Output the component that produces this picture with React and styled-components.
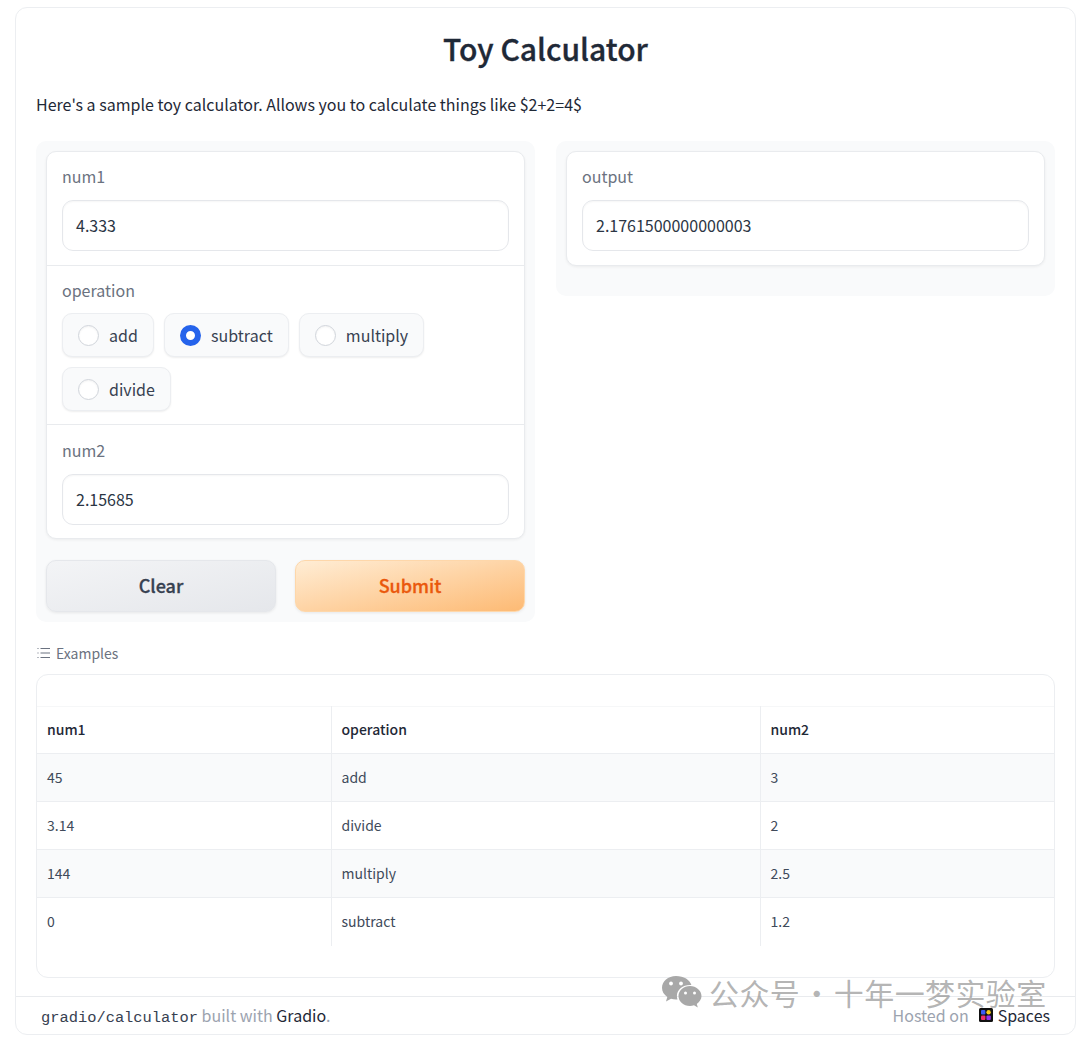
import React from "react";
import styled, { createGlobalStyle } from "styled-components";

const Global = createGlobalStyle`
  html, body { margin: 0; padding: 0; background: #fff; }
  body { font-family: "Noto Sans CJK SC", "Noto Sans", sans-serif; color: #1f2937; }
  * { box-sizing: border-box; }
`;
const Page = styled.div`
  position: relative;
  width: 1080px;
  height: 1037px;
  padding: 7px 4px 2px 15px;
`;
const Card = styled.div`
  height: 1028px;
  border: 1px solid #eceef1;
  border-radius: 12px;
  display: flex;
  flex-direction: column;
`;
const Main = styled.main`
  flex: 1;
  padding: 0 20px;
`;
const Title = styled.h1`
  margin: 0;
  padding-top: 19px;
  height: 70px;
  line-height: 42px;
  text-align: center;
  font-size: 30px;
  font-weight: 500;
  -webkit-text-stroke: 0.35px #1f2937;
  color: #1f2937;
`;
const Desc = styled.p`
  margin: 0;
  height: 63px;
  padding-top: 14px;
  line-height: 24px;
  font-size: 16px;
  color: #1f2937;
`;
const Columns = styled.div`
  display: flex;
  gap: 21px;
  align-items: flex-start;
`;
const Panel = styled.div`
  width: 499px;
  padding: 10px;
  border-radius: 10px;
  background: #f9fafb;
  padding-bottom: ${(p) => p.$bottom || 10}px;
`;
const Form = styled.div`
  border: 1px solid #e9ebee;
  border-radius: 10px;
  background: #fff;
  box-shadow: 0 1px 3px rgba(0, 0, 0, 0.06);
  overflow: hidden;
`;
const Block = styled.div`
  padding: ${(p) => p.$top ?? 13}px 15px ${(p) => p.$bottom ?? 13}px;
  border-top: ${(p) => (p.$first ? "none" : "1px solid #e9ebee")};
`;
const Label = styled.div`
  font-size: 16px;
  line-height: 24px;
  height: 24px;
  color: #6b7280;
  margin-bottom: ${(p) => p.$mb ?? 11}px;
`;
const Input = styled.div`
  height: 51px;
  padding: 0 13px 2px;
  border: 1px solid #e5e7eb;
  border-radius: 11px;
  background: #fff;
  box-shadow: inset 0 1px 2px rgba(0, 0, 0, 0.04);
  display: flex;
  align-items: center;
  font-size: 16px;
  color: #2b3544;
`;
const Radios = styled.div`
  display: flex;
  flex-wrap: wrap;
  gap: 10px 10.2px;
`;
const Radio = styled.div`
  height: 44px;
  padding: 0 15px;
  display: flex;
  align-items: center;
  gap: 10px;
  border: 1px solid #eceef1;
  border-radius: 10px;
  background: #f9fafb;
  box-shadow: 0 1px 2px rgba(0, 0, 0, 0.07);
  font-size: 16px;
  color: #374151;
`;
const Dot = styled.span`
  width: 21px;
  height: 21px;
  border-radius: 50%;
  background: #fff;
  border: ${(p) => (p.$on ? "6.5px solid #2563eb" : "1px solid #d1d5db")};
  box-shadow: ${(p) => (p.$on ? "none" : "inset 0 1px 2px rgba(0,0,0,.05)")};
`;
const Buttons = styled.div`
  display: flex;
  gap: 19px;
  margin-top: 21px;
`;
const Button = styled.div`
  flex: 1;
  height: 52px;
  padding-bottom: 2px;
  border-radius: 10px;
  display: flex;
  align-items: center;
  justify-content: center;
  font-size: 18px;
  font-weight: 500;
  -webkit-text-stroke: 0.3px ${(p) => (p.$primary ? "#ea580c" : "#374151")};
  border: 1px solid ${(p) => (p.$primary ? "#fed7aa" : "#e5e7eb")};
  color: ${(p) => (p.$primary ? "#ea580c" : "#374151")};
  background: ${(p) =>
    p.$primary
      ? "linear-gradient(to bottom right, #ffedd5, #fdba74)"
      : "linear-gradient(to bottom right, #f3f4f6, #e5e7eb)"};
  box-shadow: 0 1px 3px rgba(0, 0, 0, 0.08);
`;
const ExamplesHead = styled.div`
  display: flex;
  align-items: center;
  gap: 5px;
  height: 24px;
  margin-top: 19px;
  padding-left: 1px;
  font-size: 14px;
  color: #6b7280;
`;
const TableBox = styled.div`
  margin-top: 9px;
  height: 304px;
  padding-top: 31px;
  border: 1px solid #eceef1;
  border-radius: 12px;
  background: #fff;
`;
const Table = styled.table`
  width: 100%;
  table-layout: fixed;
  border-collapse: collapse;
  font-size: 14px;
`;
const Tr = styled.tr`
  height: ${(p) => (p.$head ? 47 : 48)}px;
  background: ${(p) => (p.$odd ? "#f9fafb" : "#fff")};
  border-top: 1px solid ${(p) => (p.$head ? "#f6f7f8" : "#eceef1")};
`;
const Th = styled.th`
  text-align: left;
  padding: 0 10px 2px;
  font-weight: 500;
  color: #1f2937;
  border-left: ${(p) => (p.$first ? "none" : "1px solid #eceef1")};
`;
const Td = styled.td`
  padding: 0 10px 2px;
  color: #404a5a;
  border-left: ${(p) => (p.$first ? "none" : "1px solid #eceef1")};
`;
const Footer = styled.footer`
  height: 38px;
  padding: 0 25px 2px;
  border-top: 1px solid #e9ebee;
  display: flex;
  align-items: center;
  justify-content: space-between;
  font-size: 16px;
  color: #9ca3af;
`;
const Mono = styled.span`
  font-family: "Liberation Mono", monospace;
  font-size: 15.4px;
  color: #374151;
`;
const Strong = styled.span`
  color: #1f2937;
`;
const Spaces = styled.span`
  display: inline-flex;
  align-items: center;
  gap: 5px;
  margin-left: 10px;
  color: #1f2937;
`;
const Hosted = styled.div`
  display: flex;
  align-items: center;
`;
const Watermark = styled.div`
  position: absolute;
  left: 661px;
  top: 972px;
  display: flex;
  align-items: center;
  gap: 7px;
  font-size: 30px;
  line-height: 40px;
  letter-spacing: 0.4px;
  word-spacing: -5.5px;
  color: rgba(125, 125, 125, 0.58);
  pointer-events: none;
`;

const ListIcon = () => (
  <svg width="14" height="12" viewBox="0 0 14 12" fill="none" stroke="#6b7280" strokeWidth="1">
    <path d="M3.5 1.5H13M3.5 6H13M3.5 10.5H13" />
    <path d="M0.5 1.5H1.5M0.5 6H1.5M0.5 10.5H1.5" />
  </svg>
);
const SpacesLogo = () => (
  <svg width="14" height="14" viewBox="0 0 14 14">
    <rect width="14" height="14" rx="1.5" fill="#111" />
    <rect x="2" y="2" width="4.4" height="4.4" rx="1" fill="#3b5bf5" />
    <circle cx="9.6" cy="4.2" r="2.2" fill="#facc15" />
    <rect x="2" y="7.6" width="4.4" height="4.4" rx="1" fill="#ef2f6b" />
    <rect x="7.4" y="7.6" width="4.4" height="4.4" rx="1" fill="#9333ea" />
  </svg>
);
const WeChat = () => (
  <svg width="41" height="34" viewBox="0 0 41 34">
    <path
      fill="#a8a8a8"
      d="M15 1C7 1 1 6.200 1 12.800c0 3.800 2 7 5.300 9.200L5 26.500l5-2.700c1.600.5 3.200.8 5 .8.600 0 1 0 1.500-.1-.4-1.200-.6-2.400-.6-3.700C16 14.600 21.800 10 29 10c.5 0 1 0 1.400.1C29 4.800 22.700 1 15 1z"
    />
    <path
      fill="#a8a8a8"
      d="M40.500 21c0-5.700-5.400-10.100-11.500-10.100-6.500 0-11.500 4.500-11.500 10.100S22.500 31 29 31c1.300 0 2.700-.3 4-.7l3.800 2.200-1-3.600c2.800-2 4.700-4.800 4.700-7.900z"
    />
    <circle cx="10" cy="8.500" r="1.900" fill="#fff" />
    <circle cx="20" cy="8.500" r="1.900" fill="#fff" />
    <circle cx="24.500" cy="18" r="1.500" fill="#fff" />
    <circle cx="33.500" cy="18" r="1.500" fill="#fff" />
  </svg>
);

const rows = [
  ["45", "add", "3"],
  ["3.14", "divide", "2"],
  ["144", "multiply", "2.5"],
  ["0", "subtract", "1.2"],
];
const ops = ["add", "subtract", "multiply", "divide"];

export default function App() {
  return (
    <Page>
      <Global />
      <Card>
        <Main>
          <Title>Toy Calculator</Title>
          <Desc>Here's a sample toy calculator. Allows you to calculate things like $2+2=4$</Desc>
          <Columns>
            <Panel>
              <Form>
                <Block $first $top={12} $bottom={14}>
                  <Label $mb={12}>num1</Label>
                  <Input>4.333</Input>
                </Block>
                <Block $top={12}>
                  <Label>operation</Label>
                  <Radios>
                    {ops.map((o) => (
                      <Radio key={o}>
                        <Dot $on={o === "subtract"} />
                        {o}
                      </Radio>
                    ))}
                  </Radios>
                </Block>
                <Block>
                  <Label $mb={12}>num2</Label>
                  <Input>2.15685</Input>
                </Block>
              </Form>
              <Buttons>
                <Button>Clear</Button>
                <Button $primary>Submit</Button>
              </Buttons>
            </Panel>
            <Panel $bottom={30}>
              <Form>
                <Block $first $top={12} $bottom={14}>
                  <Label $mb={12}>output</Label>
                  <Input>2.1761500000000003</Input>
                </Block>
              </Form>
            </Panel>
          </Columns>
          <ExamplesHead>
            <ListIcon />
            Examples
          </ExamplesHead>
          <TableBox>
            <Table>
              <colgroup>
                <col style={{ width: 294 }} />
                <col style={{ width: 429 }} />
                <col style={{ width: 294 }} />
              </colgroup>
              <thead>
                <Tr $head>
                  <Th $first>num1</Th>
                  <Th>operation</Th>
                  <Th>num2</Th>
                </Tr>
              </thead>
              <tbody>
                {rows.map((r, i) => (
                  <Tr key={r[0]} $odd={i % 2 === 0}>
                    <Td $first>{r[0]}</Td>
                    <Td>{r[1]}</Td>
                    <Td>{r[2]}</Td>
                  </Tr>
                ))}
              </tbody>
            </Table>
          </TableBox>
        </Main>
        <Footer>
          <div>
            <Mono>gradio/calculator</Mono> built with <Strong>Gradio</Strong>.
          </div>
          <Hosted>
            Hosted on
            <Spaces>
              <SpacesLogo />
              Spaces
            </Spaces>
          </Hosted>
        </Footer>
      </Card>
      <Watermark>
        <WeChat />
        公众号 · 十年一梦实验室
      </Watermark>
    </Page>
  );
}
